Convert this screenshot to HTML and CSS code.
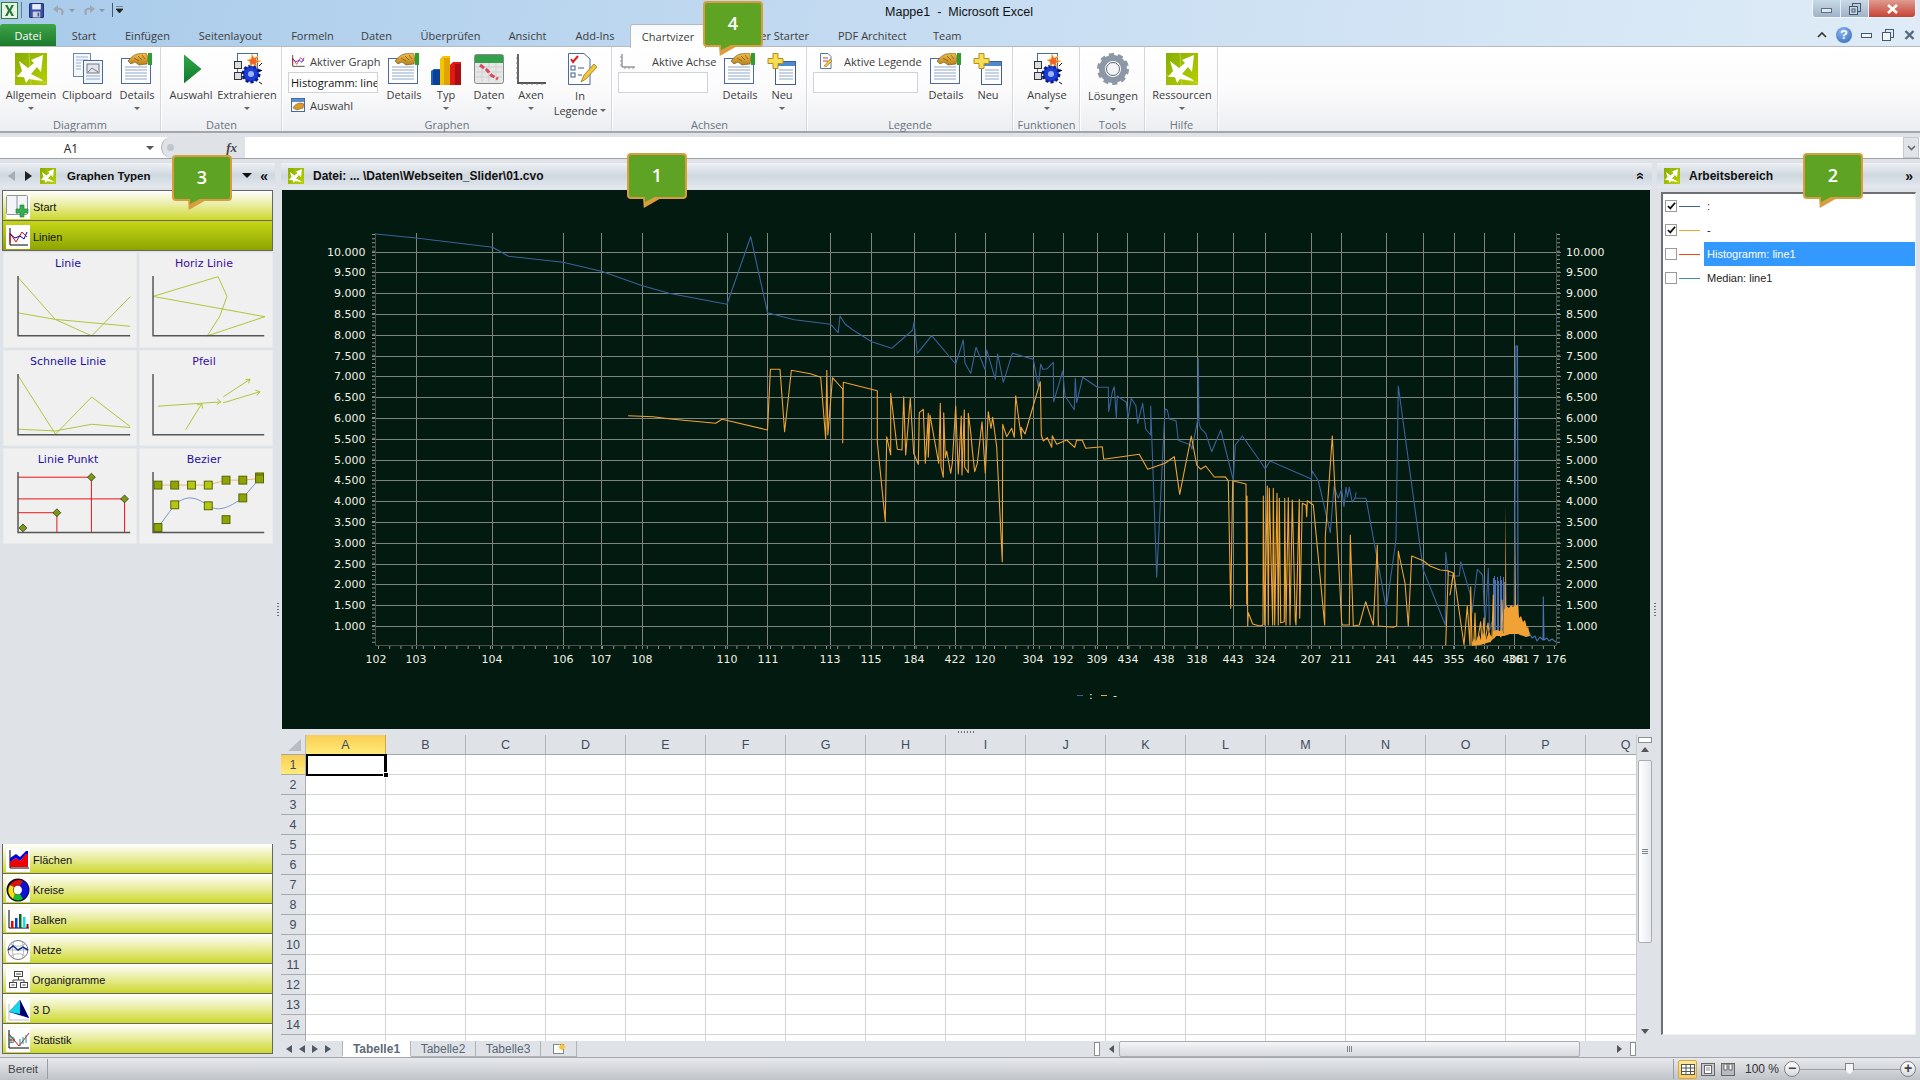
FILE: index.html
```html
<!DOCTYPE html>
<html lang="de">
<head>
<meta charset="utf-8">
<title>Mappe1 - Microsoft Excel</title>
<link rel="stylesheet" href="styles.css">
</head>
<body>
<svg class="defs" width="0" height="0">
  <defs>
    <linearGradient id="lime" x1="0" y1="0" x2="1" y2="1"><stop offset="0" stop-color="#86ad00"/><stop offset="1" stop-color="#b7cf00"/></linearGradient>
    <linearGradient id="play" x1="0" y1="0" x2="0" y2="1"><stop offset="0" stop-color="#2fa94a"/><stop offset="1" stop-color="#0f7a2a"/></linearGradient>
    <linearGradient id="hand" x1="0" y1="0" x2="0" y2="1"><stop offset="0" stop-color="#f2c04a"/><stop offset="1" stop-color="#b8801c"/></linearGradient>
    <symbol id="logo" viewBox="0 0 32 32">
      <rect width="32" height="32" fill="url(#lime)"/>
      <path d="M14 0 16 32M0 22 32 30" stroke="#c9dc5a" stroke-width=".7" fill="none"/>
      <path d="M28 2 26 19 22 14 16 21 26 26 28 28 14 26 11 30 9 24 2 24 7 18 4 8 13 15 19 10 16 7Z" fill="#fff"/>
    </symbol>
    <symbol id="details" viewBox="0 0 32 32">
      <rect x=".5" y="5.500" width="29" height="25" fill="#fff" stroke="#4b6a9e"/>
      <path d="M4 14H26M4 17H26M4 20H26M4 23H26M4 26H26" stroke="#8ea7c9"/>
      <path d="M7 8C10 4 13 2 16 1L25 0 27 4 26 11 18 12 14 9 10 11Z" fill="url(#hand)" stroke="#6b4a12" stroke-width=".6"/>
      <path d="M13 5 18 8M17 3 21 7M21 2 24 6" stroke="#7a4f10" stroke-width=".7"/>
      <rect x="27" y="0" width="4" height="12" fill="#2f9e2f"/>
    </symbol>
    <symbol id="neu" viewBox="-2 0 32 32">
      <rect x="7.500" y="8.500" width="20" height="23" fill="#fff" stroke="#3f5f93"/>
      <rect x="8" y="9" width="19" height="4" fill="#4f8ad0"/>
      <path d="M11 17H25M11 20H25M11 23H25M11 26H25" stroke="#8ea7c9"/>
      <path d="M5 .5H10V5.500H15V10.500H10V15.500H5V10.500H0V5.500H5Z" fill="#f7dc55" stroke="#b58e1e"/>
    </symbol>
    <symbol id="gearblue" viewBox="0 0 32 32">
      <rect x="6.500" y="0.500" width="20" height="25" fill="#fff" stroke="#4b6a9e"/>
      <rect x="3.500" y="8.500" width="7" height="7" fill="#ddd" stroke="#333"/>
      <rect x="3.500" y="19.500" width="7" height="7" fill="#ddd" stroke="#333"/>
      <circle cx="20" cy="21" r="8" fill="#1c3cd8" stroke="#0a1f8c" stroke-width="3" stroke-dasharray="3 2"/>
      <circle cx="20" cy="21" r="3" fill="#9db4f5"/>
      <path d="M21 1 23 5 27 3 25 7 30 8 25 10 26 14 22 11 19 13 19 9 16 7 20 6Z" fill="#f2622a" stroke="#f9d24a" stroke-width=".7"/>
      <path d="M29 16V19M27.500 17.500H31M28 29 31 31M28 13 31 10" stroke="#111"/>
    </symbol>
    <symbol id="chartline" viewBox="0 0 24 24">
      <path d="M4 3V20H22" stroke="#000" fill="none"/>
      <path d="M4 18V8L10 17 16 7 21 12" stroke="#e00" fill="none"/>
      <path d="M4 9 9 13 14 11 18 14 21 7" stroke="#00c" fill="none"/>
    </symbol>
  </defs>
</svg>
<div class="app">

  <div class="top">
    <div class="titlebar">
      <div class="qat">
        <svg class="qat-x" viewBox="0 0 17 17"><rect x=".5" y=".5" width="16" height="16" fill="#e9f3e6" stroke="#2f7d3a"/><path d="M4 3 7 8.500 4 14H6.500L8.500 10 10.500 14H13L10 8.500 13 3H10.500L8.500 7 6.500 3Z" fill="#1f7a34"/></svg>
        <span class="qat-sep"></span>
        <svg class="qat-i" viewBox="0 0 14 14"><rect x=".5" y=".5" width="13" height="13" rx="1" fill="#3a4fa8" stroke="#23306e"/><rect x="3" y="1" width="8" height="5" fill="#e8eef8"/><rect x="3.500" y="8" width="7" height="5.500" fill="#c9ced8"/><rect x="8" y="9" width="1.500" height="3.500" fill="#3a4fa8"/></svg>
        <svg class="qat-u" viewBox="0 0 14 14"><path d="M11 12C13 7 10 4 6 5L6 2 1 6 6 10 6 7C9 6 10 8 9 12Z" fill="#9ea7b3"/></svg>
        <span class="qat-arrow"></span>
        <svg class="qat-u" viewBox="0 0 14 14"><path d="M3 12C1 7 4 4 8 5L8 2 13 6 8 10 8 7C5 6 4 8 5 12Z" fill="#9ea7b3"/></svg>
        <span class="qat-arrow"></span>
        <span class="qat-sep2"></span>
        <svg class="qat-d" viewBox="0 0 7 8"><path d="M0 0H7M0 3H7L3.500 7Z" stroke="#222" fill="#222" stroke-width=".8"/></svg>
      </div>
      <div class="title">Mappe1  -  Microsoft Excel</div>
      <div class="winctl">
        <div class="wbtn wmin"><span class="min-ic"></span></div>
        <div class="wbtn wmax"><svg viewBox="0 0 12 12" class="max-ic"><rect x="3.500" y=".5" width="8" height="8" fill="none" stroke="#44586e"/><rect x=".5" y="3.500" width="8" height="8" fill="#c9d5e1" stroke="#44586e"/><rect x="3" y="6" width="3" height="3" fill="none" stroke="#44586e"/></svg></div>
        <div class="wbtn wclose"><svg viewBox="0 0 13 10" class="x-ic"><path d="M2 1 11 9M11 1 2 9" stroke="#fff" stroke-width="2.600"/></svg></div>
      </div>
    </div>
    <div class="tabs">
      <div class="tab tab-file">Datei</div>
      <div class="tab w-start">Start</div>
      <div class="tab w-einf">Einfügen</div>
      <div class="tab w-seit">Seitenlayout</div>
      <div class="tab w-form">Formeln</div>
      <div class="tab w-dat">Daten</div>
      <div class="tab w-ueb">Überprüfen</div>
      <div class="tab w-ans">Ansicht</div>
      <div class="tab w-add">Add-Ins</div>
      <div class="tab tab-on">Chartvizer</div>
      <div class="tab w-pow">Power Starter</div>
      <div class="tab w-pdf">PDF Architect</div>
      <div class="tab w-team">Team</div>
      <div class="tab-right">
        <svg class="tr-up" viewBox="0 0 10 8"><path d="M1 6 5 2 9 6" fill="none" stroke="#333" stroke-width="1.600"/></svg>
        <div class="help">?</div>
        <span class="tr-min"></span>
        <svg class="tr-rest" viewBox="0 0 12 12"><rect x="3.500" y=".5" width="8" height="8" fill="none" stroke="#44586e"/><rect x=".5" y="3.500" width="8" height="8" fill="#f0f5fa" stroke="#44586e"/></svg>
        <svg class="tr-x" viewBox="0 0 11 10"><path d="M1.500 1 9.500 9M9.500 1 1.500 9" stroke="#56687c" stroke-width="2.400"/></svg>
      </div>
    </div>
  </div>

  <div class="ribbon">
    <div class="group g-diag">
      <div class="gbody gb-diag">
        <div class="rb w56"><svg class="ic32"><use href="#logo"/></svg><span class="rl">Allgemein</span><span class="dd"></span></div>
        <div class="rb w56">
          <svg class="ic32" viewBox="0 0 32 32"><rect x="2.500" y=".5" width="17" height="23" fill="#f4f7fb" stroke="#6d86ad"/><path d="M5 4H17M5 7H17M5 10H10M5 13H10M5 16H10" stroke="#9fb2cd"/><rect x="12.500" y="7.500" width="19" height="23" fill="#f2f6fb" stroke="#4b6a9e"/><rect x="16" y="11" width="12" height="9" fill="#dfe5ee" stroke="#777"/><path d="M17 19 21 15 27 19" stroke="#777" fill="none"/><path d="M15 23H29M15 26H29" stroke="#8ea7c9"/></svg>
          <span class="rl">Clipboard</span>
        </div>
        <div class="rb w44"><svg class="ic32"><use href="#details"/></svg><span class="rl">Details</span><span class="dd"></span></div>
      </div>
      <div class="glabel">Diagramm</div>
    </div>
    <div class="group g-daten">
      <div class="gbody gb-daten">
        <div class="rb w58"><svg class="ic32" viewBox="0 0 32 32"><path d="M9 2 26 16 9 30Z" fill="url(#play)"/><path d="M9 2 26 16 9 30" fill="none" stroke="#0c6a22" stroke-width=".6"/></svg><span class="rl">Auswahl</span></div>
        <div class="rb w54"><svg class="ic32"><use href="#gearblue"/></svg><span class="rl">Extrahieren</span><span class="dd"></span></div>
      </div>
      <div class="glabel">Daten</div>
    </div>
    <div class="group g-graph">
      <div class="gbody gb-graph">
        <div class="smallcol w92">
          <div class="srow"><svg class="ic16"><use href="#chartline"/></svg><span>Aktiver Graph</span></div>
          <div class="sinput inp92">Histogramm: line</div>
          <div class="srow srow3"><svg class="ic16" viewBox="0 0 16 16"><rect x="1.500" y="1.500" width="13" height="13" fill="#fff" stroke="#4b6a9e"/><rect x="2" y="2" width="12" height="3" fill="#5b8fd1"/><path d="M3 11C5 7 8 6 11 6L14 7 13 11 7 13Z" fill="#d99a2a" stroke="#6b4a12" stroke-width=".5"/></svg><span>Auswahl</span></div>
        </div>
        <div class="rb w48"><svg class="ic32"><use href="#details"/></svg><span class="rl">Details</span></div>
        <div class="rb w36">
          <svg class="ic32" viewBox="0 0 32 32"><path d="M1 18 4 16H10V32H1Z" fill="#1463c8"/><rect x="3" y="17" width="7" height="15" fill="#0d3f94"/><path d="M10 6 13 3H20V32H10Z" fill="#f5c400"/><rect x="14" y="5" width="6" height="27" fill="#e0a400"/><path d="M20 12 23 9H31V32H20Z" fill="#e01818"/><rect x="25" y="11" width="6" height="21" fill="#a80e0e"/></svg>
          <span class="rl">Typ</span><span class="dd"></span>
        </div>
        <div class="rb w50">
          <svg class="ic32" viewBox="0 0 32 32"><rect x="1.500" y="1.500" width="29" height="29" rx="2" fill="#e6e6e6" stroke="#888"/><rect x="2" y="2" width="28" height="8" fill="#33a04b"/><path d="M3 14H29M3 19H29M3 24H29M9 10V29M16 10V29M23 10V29" stroke="#cfcfcf"/><path d="M7 12 14 17 18 22 25 26" stroke="#d84a5a" stroke-width="3" stroke-dasharray="5 2" fill="none"/></svg>
          <span class="rl">Daten</span><span class="dd"></span>
        </div>
        <div class="rb w34">
          <svg class="ic32" viewBox="0 0 32 32"><path d="M3 1V30H31" fill="none" stroke="#555" stroke-width="1.800"/><path d="M1 5H3M1 10H3M1 15H3M1 20H3M1 25H3M7 30V32M12 30V32M17 30V32M22 30V32M27 30V32" stroke="#777"/></svg>
          <span class="rl">Axen</span><span class="dd"></span>
        </div>
        <div class="rb w64">
          <svg class="ic32" viewBox="0 0 32 32"><path d="M4.500 .5H20L26 6V31.500H4.500Z" fill="#fff" stroke="#4b6a9e"/><path d="M7 6 9 9 14 3" stroke="#d92020" stroke-width="2" fill="none"/><rect x="7" y="13" width="4" height="4" fill="#fff" stroke="#3a5a8c"/><rect x="7" y="20" width="4" height="4" fill="#fff" stroke="#3a5a8c"/><path d="M14 15H20M14 22H18" stroke="#3a5a8c"/><path d="M17 29 20 22 30 11 33 14 22 26Z" fill="#f2c53c" stroke="#8a6a10" stroke-width=".7"/></svg>
          <span class="rl rl2">In<br>Legende <i class="dd dd-in"></i></span>
        </div>
      </div>
      <div class="glabel">Graphen</div>
    </div>
    <div class="group g-achs">
      <div class="gbody gb-achs">
        <div class="smallcol w100">
          <div class="srow"><svg class="ic16 ic-l" viewBox="0 0 16 16"><path d="M2 1V14H15" fill="none" stroke="#666" stroke-width="1"/><path d="M0 4H2M0 8H2M0 12H2M5 14V16M9 14V16M13 14V16" stroke="#999"/></svg><span class="tx-achse">Aktive Achse</span></div>
          <div class="sinput inp90"></div>
        </div>
        <div class="rb w44"><svg class="ic32"><use href="#details"/></svg><span class="rl">Details</span></div>
        <div class="rb w40"><svg class="ic32"><use href="#neu"/></svg><span class="rl">Neu</span><span class="dd"></span></div>
      </div>
      <div class="glabel">Achsen</div>
    </div>
    <div class="group g-leg">
      <div class="gbody gb-leg">
        <div class="smallcol w112">
          <div class="srow"><svg class="ic16 ic-leg" viewBox="0 0 16 16"><path d="M2.500 .5H10L13 3.500V15.500H2.500Z" fill="#fff" stroke="#5a76a3"/><path d="M5 5H10M5 8H10" stroke="#c04040"/><path d="M6 13 12 6 14 8 8 14Z" fill="#f0c040" stroke="#8a6a10" stroke-width=".5"/></svg><span class="tx-leg">Aktive Legende</span></div>
          <div class="sinput inp105"></div>
        </div>
        <div class="rb w44"><svg class="ic32"><use href="#details"/></svg><span class="rl">Details</span></div>
        <div class="rb w40"><svg class="ic32"><use href="#neu"/></svg><span class="rl">Neu</span></div>
      </div>
      <div class="glabel">Legende</div>
    </div>
    <div class="group g-funk">
      <div class="gbody gb-one"><div class="rb w66"><svg class="ic32"><use href="#gearblue"/></svg><span class="rl">Analyse</span><span class="dd"></span></div></div>
      <div class="glabel">Funktionen</div>
    </div>
    <div class="group g-tool">
      <div class="gbody gb-one">
        <div class="rb w64">
          <svg class="ic32" viewBox="0 0 32 32"><circle cx="16" cy="16" r="11" fill="none" stroke="#8d98a6" stroke-width="6"/><circle cx="16" cy="16" r="14" fill="none" stroke="#8d98a6" stroke-width="4" stroke-dasharray="5 3.800"/><circle cx="16" cy="16" r="6.500" fill="#f3f4f6" stroke="#5f6a78"/></svg>
          <span class="rl rl-los">Lösungen</span><span class="dd"></span>
        </div>
      </div>
      <div class="glabel">Tools</div>
    </div>
    <div class="group g-hilf">
      <div class="gbody gb-one"><div class="rb w72"><svg class="ic32"><use href="#logo"/></svg><span class="rl">Ressourcen</span><span class="dd"></span></div></div>
      <div class="glabel">Hilfe</div>
    </div>
  </div>

  <div class="fstrip"></div>
  <div class="formula">
    <div class="namebox"><span class="nb-text">A1</span><span class="nb-arrow"></span></div>
    <div class="fxbox"><span class="fx-round"></span><span class="fx">fx</span></div>
    <div class="finput"></div>
    <div class="fexpand"><svg viewBox="0 0 9 6" class="fexp-ic"><path d="M1 1 4.500 4.500 8 1" fill="none" stroke="#667" stroke-width="1.600"/></svg></div>
  </div>
  <div class="fstrip2"></div>

  <div class="work">
    <div class="left">
      <div class="phead phead-left">
        <span class="nav-l"></span><span class="nav-r"></span>
        <svg class="ic16"><use href="#logo"/></svg>
        <span class="ptitle ptitle-g">Graphen Typen</span>
        <span class="pspacer"></span>
        <span class="ph-down"></span>
        <span class="chev chev-l">«</span>
      </div>
      <div class="acc acc-first">
        <span class="accic"><svg viewBox="0 0 24 24"><rect x=".5" y=".5" width="21" height="19" rx="1" fill="#f3f5f8" stroke="#8b94a0"/><path d="M11 1V19" stroke="#8b94a0"/><path d="M14 10H18V14H22V18H18V22H14V18H10V14H14Z" fill="#36b04c" stroke="#1b7a2b" stroke-width=".6"/></svg></span>
        <span>Start</span>
      </div>
      <div class="acc acc-on">
        <span class="accic"><svg viewBox="0 0 24 24"><use href="#chartline"/></svg></span>
        <span>Linien</span>
      </div>
      <div class="gallery">
        <div class="gcell"><div class="gtitle">Linie</div>
          <svg class="gs" viewBox="0 0 134 74"><polyline class="lim" points="14,3 52,46 89,62.700 128,23"/><polyline class="lim" points="14,39.300 52,46 128,53"/><path class="gax" d="M14.300 2V62.700H128"/></svg></div>
        <div class="gcell"><div class="gtitle gt-v">Horiz Linie</div>
          <svg class="gs" viewBox="0 0 134 74"><polyline class="lim" points="13.300,22.700 79.300,2.700 88.300,22.700 81,42.700 68.300,62.700 126.700,43.300 13.300,22.700"/><path class="gax" d="M13.300 2V62.700H126"/></svg></div>
        <div class="gcell"><div class="gtitle">Schnelle Linie</div>
          <svg class="gs" viewBox="0 0 134 74"><polyline class="lim" points="14,3 52.300,63 89,25.300 128,55.300"/><polyline class="lim" points="14,58 52.300,59.700 89,53 128,56.300"/><path class="gax" d="M14.300 2V63.700H128"/></svg></div>
        <div class="gcell"><div class="gtitle gt-v">Pfeil</div>
          <svg class="gs" viewBox="0 0 134 74"><path class="lim" d="M18.300 34.700 82 30.300M78 27 82 30.300 78 33M46.300 58.700 62.700 32M58 33.500 62.700 32 63.500 37M84.300 31.300 121.700 20M117 18.500 121.700 20 118.500 24M84.300 25.300 111.700 7.300M107 7.500 111.700 7.300 110 11.500"/><path class="gax" d="M13.300 2V63.700H126"/></svg></div>
        <div class="gcell"><div class="gtitle">Linie Punkt</div>
          <svg class="gs" viewBox="0 0 134 74"><path class="red" d="M14 7.300H88.700V63M14 29.300H122.300V63M14 43.300H53.700V63"/><path class="gax" d="M14.300 2V63.300H128"/><path class="dia" d="M88.700 3.300 92.700 7.300 88.700 11.300 84.700 7.300ZM122.300 25.300 126.300 29.300 122.300 33.300 118.300 29.300ZM53.700 39.300 57.700 43.300 53.700 47.300 49.700 43.300ZM19.300 54.700 23.300 58.700 19.300 62.700 15.300 58.700Z"/></svg></div>
        <div class="gcell"><div class="gtitle">Bezier</div>
          <svg class="gs" viewBox="0 0 134 74"><path class="gax" d="M13.300 2V63.300H126"/><path class="bz-o" d="M18 15.300H69L87 10.300H104L121 8.700"/><path class="bz-b" d="M18.300 58.300 35.300 35.300C48 24 58 28 69.300 36.300 82 44 94 35 104.300 28.300L121.300 8.700"/>
            <g class="sq"><rect x="14.300" y="11.300" width="8" height="8"/><rect x="31.300" y="11.300" width="8" height="8"/><rect class="sq2" x="48.300" y="11.300" width="8" height="8"/><rect class="sq2" x="65.300" y="11.300" width="8" height="8"/><rect x="83.300" y="6.300" width="8" height="8"/><rect x="100.300" y="6.300" width="8" height="8"/><rect x="117.300" y="3" width="8" height="8"/><rect x="117.300" y="5" width="8" height="8"/><rect x="14.300" y="54.300" width="8" height="8"/><rect class="sq2" x="31.300" y="31.300" width="8" height="8"/><rect class="sq2" x="65.300" y="32.300" width="8" height="8"/><rect x="100.300" y="24.300" width="8" height="8"/><rect x="83.300" y="46.300" width="8" height="8"/></g></svg></div>
      </div>
      <div class="pspacer"></div>
      <div class="acc"><span class="accic"><svg viewBox="0 0 24 24"><path d="M4 2V20H23" stroke="#000" fill="none"/><path d="M4 14 10 10 14 13 20 6 22 6V19H4Z" fill="#e00"/><path d="M4 10 10 6 14 9 20 3 22 3V6L20 6 14 13 10 10 4 14Z" fill="#00d"/></svg></span><span>Flächen</span></div>
      <div class="acc"><span class="accic"><svg viewBox="0 0 24 24"><circle cx="12" cy="12" r="8" fill="none" stroke="#111" stroke-width="7"/><path d="M4 7A10 10 0 0 1 17 3L14 8A5 5 0 0 0 8 9Z" fill="#e01010"/><path d="M17 3A10 10 0 0 1 17 21L14 16A5 5 0 0 0 14 8Z" fill="#1010d8"/><path d="M17 21A10 10 0 0 1 7 21L9 16A5 5 0 0 0 14 16Z" fill="#10c030"/><path d="M7 21A10 10 0 0 1 4 7L8 9A5 5 0 0 0 9 16Z" fill="#f5e010"/></svg></span><span>Kreise</span></div>
      <div class="acc"><span class="accic"><svg viewBox="0 0 24 24"><path d="M3 2V20H23" stroke="#000" fill="none"/><rect x="5" y="13" width="2.500" height="7" fill="#e00"/><rect x="9" y="10" width="2.500" height="10" fill="#0040d0"/><rect x="13" y="6" width="2.500" height="14" fill="#006a20"/><rect x="17" y="9" width="2.500" height="11" fill="#10e0e0"/><rect x="20.500" y="16" width="2" height="4" fill="#a00000"/></svg></span><span>Balken</span></div>
      <div class="acc"><span class="accic"><svg viewBox="0 0 24 24"><ellipse cx="12" cy="12" rx="10" ry="9.500" fill="#fff" stroke="#777"/><path d="M2 12H22M5 6C10 9 14 9 19 6M5 18C10 15 14 15 19 18M8 3C6 9 6 15 8 21M16 3C18 9 18 15 16 21" fill="none" stroke="#999" stroke-width=".7"/><path d="M2 12 7 8 12 12 17 9 22 12" fill="none" stroke="#0a2a90" stroke-width="1.500"/></svg></span><span>Netze</span></div>
      <div class="acc"><span class="accic"><svg viewBox="0 0 24 24"><rect x="8.500" y="3.500" width="8" height="5" fill="#fff" stroke="#444"/><rect x="3.500" y="14.500" width="7" height="5" fill="#fff" stroke="#444"/><rect x="14.500" y="14.500" width="7" height="5" fill="#fff" stroke="#444"/><path d="M12.500 9V12M7 14V12H18V14M10 6H15M5.500 17H8.500M16.500 17H19.500" fill="none" stroke="#444"/></svg></span><span class="acc-org">Organigramme</span></div>
      <div class="acc"><span class="accic"><svg viewBox="0 0 24 24"><path d="M3 6V22H23" fill="none" stroke="#bbb"/><path d="M14 2 23 20 3 14Z" fill="#0a0aa8"/><path d="M14 2 3 14 14 16Z" fill="#15d8e6"/><path d="M14 2 14 16 23 20Z" fill="#00006a"/></svg></span><span>3 D</span></div>
      <div class="acc"><span class="accic"><svg viewBox="0 0 24 24"><path d="M3 2V20H23" stroke="#000" fill="none"/><path d="M3 6 13 18 23 5" fill="none" stroke="#e00"/><path d="M3 8 8 10V14L3 15M5 8V14M14 11V18M17 9V16M20 7V15" fill="none" stroke="#0a9a9a"/><path d="M3 12H9" stroke="#e00"/></svg></span><span>Statistik</span></div>
    </div>

    <div class="vsplit"><span class="grip"></span></div>

    <div class="center">
      <div class="phead phead-c">
        <svg class="ic16"><use href="#logo"/></svg>
        <span class="ptitle ptitle-c">Datei: ... \Daten\Webseiten_Slider\01.cvo</span>
        <span class="pspacer"></span>
        <span class="chev chev-up">«</span>
      </div>
      <div class="chart">
        <svg class="chart-svg" width="1368" height="539" viewBox="282 190 1368 539">
          <path class="grid" d="M372 252.500H1561M372 272.500H1561M372 293.500H1561M372 314.500H1561M372 335.500H1561M372 356.500H1561M372 376.500H1561M372 397.500H1561M372 418.500H1561M372 439.500H1561M372 460.500H1561M372 480.500H1561M372 501.500H1561M372 522.500H1561M372 543.500H1561M372 564.500H1561M372 584.500H1561M372 605.500H1561M372 626.500H1561"/>
          <path class="grid" d="M416.500 233V649M492.500 233V649M563.500 233V649M601.500 233V649M642.500 233V649M727.500 233V649M767.500 233V649M830.500 233V649M871.500 233V649M914.500 233V649M955.500 233V649M985.500 233V649M1033.500 233V649M1063.500 233V649M1097.500 233V649M1127.500 233V649M1164.500 233V649M1197.500 233V649M1233.500 233V649M1265.500 233V649M1311.500 233V649M1341.500 233V649M1386.500 233V649M1423.500 233V649M1454.500 233V649M1484.500 233V649M1514.500 233V649"/>
          <path class="axis" d="M375.500 233V645.500H1556.500V233"/>
          <path class="tick" d="M373.500 234V645" stroke-dasharray="1 3.160"/>
          <path class="tick" d="M1558.500 234V645" stroke-dasharray="1 3.160"/>
          <path class="tick" d="M378 647.500H1556" stroke-dasharray="1 10.200"/>

          <polyline class="blue" points="376,234 416,238 492.500,247.300 508.600,256.300 563,262.300 601.400,271.300 642.500,285.700 669,293.300 727,304.300 750.700,236.700 767.500,312.700 794.300,319.700 830.700,324.300 838.200,332.700 840,316 845,324 853,330 871.700,341.700 891.700,348.300 912.700,330 914,322 917.300,353.300 931.700,335.700 955.700,364 963.300,340 965,363.300 970.700,373.300 976,347.300 985.300,370 986.700,350 995.300,379.300 997.700,354 1003.300,382.300 1012.300,353.300 1033.300,359.300 1038.300,386.700 1040.700,364 1042.700,369.300 1047.300,368.700 1053.300,362.300 1053.700,401.700 1062.700,371 1065,396 1074.300,409.700 1075.300,378.300 1076.700,402.700 1082.700,377.300 1097.300,387.300 1108.300,387.300 1108.700,411.700 1112.500,391 1114.300,386.700 1116.300,417.700 1117.300,396 1126.300,402.300 1128,418.300 1131.300,398.300 1136,406 1137.700,423.300 1142.700,403.300 1145.700,429 1150.700,435 1150.700,406 1156.700,577.300 1165,408.700 1167.300,410 1169.300,419 1176,420.700 1178.300,440.300 1190.700,445 1192,449.300 1198.300,416.700 1198.300,358.300 1199,423 1200.700,428.300 1205.700,433.300 1211.700,451.700 1220.700,430 1233.300,480 1235.300,445 1242.300,436 1260,461 1265.300,469 1270,461 1311.300,479 1312.300,471 1318.300,480.700 1330.300,532.700 1334,486.700 1338.300,498.300 1341.700,489.300 1344,506.700 1346,487.300 1347.500,497 1349.300,487.300 1352.300,502.300 1355,498 1356,492.700 1355,498 1366,498.300 1386.300,608.300 1396,540 1398.300,386 1423.300,570 1445.300,625 1445.700,552.300 1448.300,575 1453,576 1459.300,576 1460.700,561.700 1470,593.300 1472,613 1477.300,569.300 1482.700,575 1485,626.700 1488.300,568.300 1489.500,630 1492,622"/>
          <path class="bluedense" d="M1493.500 632V578M1494.500 632V576M1495.500 632V580M1497.500 632V577M1498.500 632V581M1500.500 632V576M1501.500 632V580M1503.500 632V577M1504.500 632V582"/>
          <polyline class="blue blue-b" points="1504,632 1506,628 1508,634 1510,628 1512,634 1514,630 1516,346 1517.500,346 1518,632 1521,635 1523,630 1526,636 1529,632 1532,638 1535,636 1537,641 1540,637 1543,640 1543.300,596.700 1544,640 1547,638 1549,641 1552,639 1556,642"/>

          <polyline class="orange" points="628.200,415.700 653,416.700 672.900,419.300 715.700,423.300 722,419.300 767.500,430 770.400,369.300 780,369.300 784.600,431.700 791.400,370.300 810.400,373.700 820.700,377.300 825.700,439 826.800,370.300 827.900,435 832.500,377.700 842.700,389 842.700,442.700 843.300,382.300 877.300,390.700 877.300,441.700 885.300,521.700 886.700,436.700 890.700,455 890.700,393.300 897.300,449.300 902,450 903.700,396.700 905.700,455 910.300,398.300 913.700,453.300 918.300,464.300 919.300,412.700 923.300,409.300 925.300,463.300 928.300,413.300 928.300,457 930,415 938.700,463.300 940.300,403.300 941,467 943.300,477.300 943.700,412.700 945.300,458 946.700,451 950.700,473.300 952.300,463 955.700,406 958.300,474 961.300,416 962,475 964.300,410 964.700,467 968.300,472.700 968.300,413.300 970.700,432 972.300,450 974.700,471.700 977.300,463.300 982,421.700 985.300,473.300 988.300,411.700 991,428.300 992.700,417.300 996.700,447 1002.300,561.700 1002.700,424.300 1006.700,436.700 1011.700,428.300 1014.300,437.300 1015.700,395.700 1020,428.300 1021.700,439 1021,427.300 1025,434 1040.300,381.700 1041.300,435 1043.300,441 1047.300,437.700 1051.700,447.300 1052.300,435.700 1056.700,444.300 1066.700,440 1074.700,447.300 1076.700,440 1082.300,440.300 1085.700,448.300 1102.300,446.700 1103.700,459.300 1139.300,454.300 1147.700,469.300 1165,463.300 1174.300,456.700 1179.700,494.300 1191.300,436 1196.700,465 1200.700,469.300 1205.700,466 1214.300,477 1225,476.700 1228.300,480.700 1230.700,608.300 1232.700,480.700 1246,484 1246.700,604 1247,496 1247.700,626 1248.300,612.700 1252.700,624 1260,626 1263,625 1263.300,496 1264.700,625 1267.300,486 1268.300,625 1269.300,488.300 1272.700,625 1273.300,488.300 1274.700,625 1277,493.300 1278.300,625 1279.300,498.300 1280.700,622.700 1284.300,621.700 1284.700,498.300 1286,625 1288.300,497.700 1290,625 1292.300,500 1295.300,620 1296,625 1299.300,499.300 1299.700,618.300 1302.300,503.300 1306,505 1306.700,516.700 1307.300,500.700 1313.300,505 1324.700,625 1325.300,536.700 1332.300,436 1341.700,623.300 1342.700,625 1349.300,625 1350.300,535 1353.300,626 1359.300,625 1365.700,601.700 1373.300,625 1377.300,545 1378.300,626 1393.300,627.300 1396.700,626 1398.300,551 1405,583 1408.300,626 1411.700,556 1423.300,560.700 1430,566 1440,570 1448.300,570.700 1445.700,645 1448.300,571 1453.300,573 1450,595 1453.700,573 1464,645 1467.300,606 1470,645 1470.700,586.700 1472,645 1474,640 1475,613 1476,645 1478,638 1480.700,621.700 1482,644 1484,618 1485,643 1488,623 1490,642 1492,636 1493.300,595 1494,638 1498,632 1501,637 1502,600 1503,634"/>
          <polygon class="orangefill" points="1472,646 1474,638 1476,642 1479,634 1481,640 1484,632 1486,640 1489,632 1492,638 1493,631 1497,630 1500,631 1502,630 1504,634 1504,610 1505,608 1505.700,505 1506.300,606 1509,608 1511,605 1513,607 1515,605 1515.300,510 1516,606 1518,604 1519,618 1521,616 1523,622 1525,620 1527,628 1528,626 1530,636 1526,637 1518,634 1510,634 1504,636 1496,636 1490,642 1480,645"/>

          <g class="yl"><text class="lab lr" x="365.500" y="256.500">10.000</text><text class="lab lr" x="365.500" y="276.500">9.500</text><text class="lab lr" x="365.500" y="297.500">9.000</text><text class="lab lr" x="365.500" y="318.500">8.500</text><text class="lab lr" x="365.500" y="339.500">8.000</text><text class="lab lr" x="365.500" y="360.500">7.500</text><text class="lab lr" x="365.500" y="380.500">7.000</text><text class="lab lr" x="365.500" y="401.500">6.500</text><text class="lab lr" x="365.500" y="422.500">6.000</text><text class="lab lr" x="365.500" y="443.500">5.500</text><text class="lab lr" x="365.500" y="464.500">5.000</text><text class="lab lr" x="365.500" y="484.500">4.500</text><text class="lab lr" x="365.500" y="505.500">4.000</text><text class="lab lr" x="365.500" y="526.500">3.500</text><text class="lab lr" x="365.500" y="547.500">3.000</text><text class="lab lr" x="365.500" y="568.500">2.500</text><text class="lab lr" x="365.500" y="588.500">2.000</text><text class="lab lr" x="365.500" y="609.500">1.500</text><text class="lab lr" x="365.500" y="630.500">1.000</text>
          <text class="lab" x="1566" y="256.500">10.000</text><text class="lab" x="1566" y="276.500">9.500</text><text class="lab" x="1566" y="297.500">9.000</text><text class="lab" x="1566" y="318.500">8.500</text><text class="lab" x="1566" y="339.500">8.000</text><text class="lab" x="1566" y="360.500">7.500</text><text class="lab" x="1566" y="380.500">7.000</text><text class="lab" x="1566" y="401.500">6.500</text><text class="lab" x="1566" y="422.500">6.000</text><text class="lab" x="1566" y="443.500">5.500</text><text class="lab" x="1566" y="464.500">5.000</text><text class="lab" x="1566" y="484.500">4.500</text><text class="lab" x="1566" y="505.500">4.000</text><text class="lab" x="1566" y="526.500">3.500</text><text class="lab" x="1566" y="547.500">3.000</text><text class="lab" x="1566" y="568.500">2.500</text><text class="lab" x="1566" y="588.500">2.000</text><text class="lab" x="1566" y="609.500">1.500</text><text class="lab" x="1566" y="630.500">1.000</text></g>
          <g class="xl"><text class="lab" x="376" y="663">102</text><text class="lab" x="416" y="663">103</text><text class="lab" x="492" y="663">104</text><text class="lab" x="563" y="663">106</text><text class="lab" x="601" y="663">107</text><text class="lab" x="642" y="663">108</text><text class="lab" x="727" y="663">110</text><text class="lab" x="768" y="663">111</text><text class="lab" x="830" y="663">113</text><text class="lab" x="871" y="663">115</text><text class="lab" x="914" y="663">184</text><text class="lab" x="955" y="663">422</text><text class="lab" x="985" y="663">120</text><text class="lab" x="1033" y="663">304</text><text class="lab" x="1063" y="663">192</text><text class="lab" x="1097" y="663">309</text><text class="lab" x="1128" y="663">434</text><text class="lab" x="1164" y="663">438</text><text class="lab" x="1197" y="663">318</text><text class="lab" x="1233" y="663">443</text><text class="lab" x="1265" y="663">324</text><text class="lab" x="1311" y="663">207</text><text class="lab" x="1341" y="663">211</text><text class="lab" x="1386" y="663">241</text><text class="lab" x="1423" y="663">445</text><text class="lab" x="1454" y="663">355</text><text class="lab" x="1484" y="663">460</text><text class="lab" x="1513" y="663">408</text><text class="lab" x="1519" y="663">361</text><text class="lab" x="1536" y="663">7</text><text class="lab" x="1556" y="663">176</text></g>
          <path class="leg-bl" d="M1077 695.500H1083"/>
          <text class="lab" x="1089" y="699">:</text>
          <path class="leg-ol" d="M1101 695.500H1107"/>
          <text class="lab" x="1113" y="699">-</text>
        </svg>
      </div>
      <div class="hsplit"><span class="hgrip"></span></div>
      <div class="sheet">
        <div class="sheet-main">
          <div class="gridarea">
            <div class="colheads">
              <div class="corner"><svg viewBox="0 0 16 14" class="corner-ic"><path d="M15 1V13H2Z" fill="#b9bdc3"/></svg></div>
              <div class="ch ch-on">A</div><div class="ch">B</div><div class="ch">C</div><div class="ch">D</div><div class="ch">E</div><div class="ch">F</div><div class="ch">G</div><div class="ch">H</div><div class="ch">I</div><div class="ch">J</div><div class="ch">K</div><div class="ch">L</div><div class="ch">M</div><div class="ch">N</div><div class="ch">O</div><div class="ch">P</div><div class="ch">Q</div>
            </div>
            <div class="gridbody">
              <div class="rowheads">
                <div class="rh rh-on">1</div><div class="rh">2</div><div class="rh">3</div><div class="rh">4</div><div class="rh">5</div><div class="rh">6</div><div class="rh">7</div><div class="rh">8</div><div class="rh">9</div><div class="rh">10</div><div class="rh">11</div><div class="rh">12</div><div class="rh">13</div><div class="rh">14</div><div class="rh"></div>
              </div>
              <div class="cells"><div class="sel"><span class="selh"></span></div></div>
            </div>
          </div>
          <div class="vscroll">
            <span class="vs-split"></span>
            <span class="vs-up"></span>
            <div class="vs-thumb"><span class="vs-grip"></span></div>
            <span class="vs-track"></span>
            <span class="vs-down"></span>
          </div>
        </div>
        <div class="tabbar">
          <div class="tnav"><span class="tn tn-first"></span><span class="tn tn-prev"></span><span class="tn tn-next"></span><span class="tn tn-last"></span></div>
          <div class="stab stab-on">Tabelle1</div>
          <div class="stab">Tabelle2</div>
          <div class="stab">Tabelle3</div>
          <div class="stab stab-new"><svg viewBox="0 0 14 12" class="newsh"><rect x="1.500" y="1.500" width="10" height="9" fill="#fff" stroke="#7d8794"/><path d="M10 0 11 2 13 1 12 3 14 4 12 5 13 7 11 6 10 8 9 6 7 7 8 5 6 4 8 3 7 1 9 2Z" fill="#f4c542"/></svg></div>
          <span class="pspacer"></span>
          <div class="hs-split"></div>
          <span class="hs-left"></span>
          <div class="hs-thumb"><span class="hs-grip"></span></div>
          <span class="hs-right"></span>
          <div class="hs-mini"></div>
          <div class="hs-end"></div>
        </div>
      </div>
    </div>

    <div class="vsplit vsplit-r"><span class="grip"></span></div>

    <div class="right">
      <div class="phead phead-r">
        <svg class="ic16"><use href="#logo"/></svg>
        <span class="ptitle ptitle-a">Arbeitsbereich</span>
        <span class="pspacer"></span>
        <span class="chev chev-r">»</span>
      </div>
      <div class="listbox">
        <div class="li"><span class="cb cb-on"><svg viewBox="0 0 11 10" class="chk"><path d="M1 5 4 8 10 1" fill="none" stroke="#111" stroke-width="2.200"/></svg></span><span class="ln ln-b"></span><span class="lt lt-c">:</span></div>
        <div class="li"><span class="cb cb-on"><svg viewBox="0 0 11 10" class="chk"><path d="M1 5 4 8 10 1" fill="none" stroke="#111" stroke-width="2.200"/></svg></span><span class="ln ln-o"></span><span class="lt">-</span></div>
        <div class="li"><span class="cb"></span><span class="ln ln-r"></span><span class="lt lt-sel">Histogramm: line1</span></div>
        <div class="li"><span class="cb"></span><span class="ln ln-t"></span><span class="lt">Median: line1</span></div>
      </div>
    </div>
  </div>

  <div class="status">
    <span class="st-text">Bereit</span>
    <span class="st-sep"></span>
    <span class="pspacer"></span>
    <span class="st-sep2"></span>
    <span class="view view-on"><svg viewBox="0 0 14 11" class="vic"><rect x=".5" y=".5" width="13" height="10" fill="#fff" stroke="#555"/><path d="M.5 4H13.500M.5 7.500H13.500M5 .5V10.500M9.500 .5V10.500" stroke="#555"/></svg></span>
    <span class="view"><svg viewBox="0 0 14 13" class="vic2"><rect x=".5" y=".5" width="13" height="12" fill="#c8ccd1" stroke="#666"/><rect x="3.500" y="2.500" width="7" height="8" fill="#fff" stroke="#666"/><path d="M5 5H9M5 7H9" stroke="#888"/></svg></span>
    <span class="view"><svg viewBox="0 0 14 13" class="vic2"><rect x=".5" y=".5" width="13" height="12" fill="#b8bcc2" stroke="#666"/><path d="M3 1V7H6V1ZM8 1V7H11V1Z" fill="#fff" stroke="#666"/></svg></span>
    <span class="zoomtx">100 %</span>
    <span class="zbtn">−</span>
    <span class="zslider"><span class="zthumb"></span></span>
    <span class="zbtn">+</span>
  </div>

  <div class="callout c1">1</div>
  <div class="callout c2">2</div>
  <div class="callout c3">3</div>
  <div class="callout c4">4</div>
</div>
</body>
</html>
```

FILE: styles.css
```css
* { box-sizing: border-box; }
html, body { margin: 0; padding: 0; background: #dfe3e8; }
.defs { position: absolute; }
.app {
  position: relative; width: 1920px; height: 1080px; overflow: hidden;
  display: flex; flex-direction: column;
  font-family: "Open Sans", "Liberation Sans", sans-serif; font-size: 11px; color: #333;
}
.pspacer { flex: 1; }

/* top */
.top { height: 47px; flex: none; background: linear-gradient(100deg, #a8cbea 0%, #c4dbf1 45%, #dfecf7 100%); }
.titlebar { height: 24px; display: grid; grid-template-columns: 1fr auto 1fr; }
.qat { display: flex; align-items: center; height: 20px; padding-left: 1px; }
.qat-x { width: 17px; height: 17px; }
.qat-sep { width: 1px; height: 16px; background: #6a7a8c; margin: 0 7px 0 3px; }
.qat-i { width: 15px; height: 15px; margin-right: 8px; }
.qat-u { width: 14px; height: 14px; }
.qat-arrow { width: 0; height: 0; border: 3px solid transparent; border-top: 3px solid #8a96a4; margin: 3px 7px 0 3px; }
.qat-sep2 { width: 1px; height: 14px; background: #44586e; margin: 0 3px 0 0; }
.qat-d { width: 7px; height: 8px; }
.title { font-family: "Liberation Sans", sans-serif; font-size: 12.500px; color: #111; white-space: pre; padding: 5px 2px 0 0; }
.winctl { justify-self: end; display: flex; height: 18px; margin-right: 4px; border: 1px solid #f0f6fb; border-top: 0; border-radius: 0 0 4px 4px; overflow: hidden; }
.wbtn { display: flex; align-items: center; justify-content: center; background: linear-gradient(#c9d9e8, #9fb2c6); border-right: 1px solid #e8eef4; }
.wmin { width: 28px; }
.wmax { width: 28px; }
.wclose { width: 46px; background: linear-gradient(#df9b90, #c74334); border-right: 0; }
.min-ic { width: 11px; height: 5px; background: #dfe7ef; border: 1px solid #5c6f83; margin-top: 4px; }
.max-ic { width: 12px; height: 12px; }
.x-ic { width: 13px; height: 10px; }

.tabs { height: 23px; display: flex; align-items: stretch; position: relative; border-bottom: 1px solid #b6babf; }
.tab { display: flex; align-items: center; justify-content: center; color: #3d3d3d; font-size: 11px; flex: none; }
.tab-file { width: 56px; background: linear-gradient(#3da448, #1c7a2c); color: #fff; border-radius: 3px 3px 0 0; margin-left: 0; }
.w-start { width: 56px; }
.w-einf { width: 71px; }
.w-seit { width: 95px; }
.w-form { width: 69px; }
.w-dat { width: 59px; }
.w-ueb { width: 89px; }
.w-ans { width: 65px; }
.w-add { width: 70px; }
.tab-on { width: 76px; height: 24px; background: linear-gradient(#f8fafc, #fff); border: 1px solid #b6babf; border-bottom: 0; border-radius: 3px 3px 0 0; }
.w-pow { width: 103px; justify-content: flex-end; }
.w-pdf { width: 63px; margin-left: 29px; justify-content: flex-start; white-space: nowrap; }
.w-team { width: 60px; margin-left: 32px; justify-content: flex-start; }
.tab-right { margin-left: auto; display: flex; align-items: center; padding-right: 5px; }
.tr-up { width: 10px; height: 8px; margin-right: 9px; }
.help { width: 16px; height: 16px; border-radius: 50%; background: radial-gradient(circle at 40% 30%, #8bb6ee, #2f66bb); color: #fff; font: bold 13px/16px "Liberation Sans", sans-serif; text-align: center; margin-right: 9px; }
.tr-min { width: 11px; height: 5px; background: #f0f5fa; border: 1px solid #44586e; margin-right: 10px; margin-top: 1px; }
.tr-rest { width: 12px; height: 12px; margin-right: 10px; }
.tr-x { width: 11px; height: 10px; }

/* ribbon */
.ribbon { height: 86px; flex: none; display: flex; background: linear-gradient(#fff 0%, #fbfbfc 50%, #eceef1 100%); border-bottom: 2px solid #a3a6ab; }
.group { display: flex; flex-direction: column; border-right: 1px solid #d4d7db; flex: none; box-shadow: 1px 0 0 #fff; margin-right: 1px; }
.g-diag { width: 161px; }
.g-daten { width: 120px; }
.g-graph { width: 329px; }
.g-achs { width: 194px; }
.g-leg { width: 205px; }
.g-funk { width: 66px; }
.g-tool { width: 64px; }
.g-hilf { width: 72px; }
.gbody { height: 70px; flex: none; display: flex; padding-top: 5px; }
.gb-diag { padding-left: 3px; }
.gb-graph { padding-left: 5px; }
.gb-achs { padding-left: 5px; }
.gb-leg { padding-left: 5px; }
.glabel { height: 14px; flex: none; text-align: center; color: #6a7481; font-size: 11px; line-height: 16px; }
.rb { display: flex; flex-direction: column; align-items: center; flex: none; padding-top: 1px; white-space: nowrap; }
.w34 { width: 34px; } .w36 { width: 36px; } .w40 { width: 40px; } .w44 { width: 44px; } .w48 { width: 48px; } .w50 { width: 50px; } .w54 { width: 54px; } .w56 { width: 56px; } .w58 { width: 58px; } .w64 { width: 64px; } .w66 { width: 66px; } .w72 { width: 72px; }
.w92 { width: 92px; } .w100 { width: 100px; } .w112 { width: 111px; }
.ic32 { width: 32px; height: 32px; flex: none; overflow: visible; }
.ic16 { width: 16px; height: 16px; flex: none; }
.rl { margin-top: 3px; line-height: 14px; color: #3c3c3c; text-align: center; }
.rl2 { line-height: 15px; margin-top: 3px; }
.rl-los { margin-top: 4px; }
.dd { width: 0; height: 0; border: 3px solid transparent; border-top: 3px solid #666; margin-top: 5px; }
.dd-in { display: inline-block; margin: 0 0 1px 0; vertical-align: middle; }
.smallcol { display: flex; flex-direction: column; flex: none; white-space: nowrap; }
.srow { display: flex; align-items: center; height: 18px; gap: 4px; color: #3c3c3c; padding-left: 2px; }
.srow3 { margin-top: 3px; }
.ic-l { margin-right: 12px; }
.ic-leg { margin-left: 3px; margin-right: 6px; }
.sinput { height: 21px; margin-top: 2px; border: 1px solid #cfd2d6; background: #fff; color: #111; font-size: 11px; line-height: 19px; padding-left: 2px; overflow: hidden; white-space: nowrap; }
.inp92 { width: 90px; }
.inp90 { width: 90px; }
.inp105 { width: 105px; }

/* formula */
.fstrip { height: 4px; flex: none; background: #dfe3e8; }
.fstrip2 { height: 5px; flex: none; background: #dfe3e8; border-top: 1px solid #9ea2a7; }
.formula { height: 21px; flex: none; display: flex; background: #fff; }
.namebox { width: 161px; display: flex; align-items: center; position: relative; background: #fff; font-size: 12px; color: #222; padding-top: 1px; }
.nb-text { width: 142px; text-align: center; }
.nb-arrow { width: 0; height: 0; border: 4px solid transparent; border-top: 4px solid #555; margin-top: 4px; margin-left: 4px; }
.fxbox { width: 84px; display: flex; align-items: center; justify-content: space-between; background: #dfe3e8; padding-right: 8px; border-radius: 12px 0 0 12px; border-left: 1px solid #a9adb2; }
.fx-round { width: 7px; height: 7px; border-radius: 50%; background: #c2c6cb; margin-left: 5px; }
.fx { font: italic bold 13px "Liberation Serif", serif; color: #444; }
.finput { flex: 1; }
.fexpand { width: 16px; background: #e1e4e8; border: 1px solid #c6cacf; display: flex; align-items: center; justify-content: center; margin-right: 1px; }
.fexp-ic { width: 9px; height: 6px; }

/* workspace */
.work { height: 894px; flex: none; display: flex; background: #dfe3e8; }
.left { width: 275px; flex: none; display: flex; flex-direction: column; padding-bottom: 3px; }
.vsplit { width: 6px; flex: none; display: flex; align-items: center; justify-content: center; background: #dfe3e8; }
.vsplit-r { width: 5px; }
.grip { width: 2px; height: 14px; background: repeating-linear-gradient(#66707c 0 1px, transparent 1px 3px); }
.center { width: 1371px; flex: none; display: flex; flex-direction: column; }
.right { flex: 1; display: flex; flex-direction: column; }
.phead { height: 25px; flex: none; display: flex; align-items: center; background: linear-gradient(#eef1f5 0%, #cfd7df 50%, #e4e9ef 100%); }
.phead-left { padding-left: 8px; padding-right: 5px; }
.nav-l, .nav-r { width: 0; height: 0; border: 5px solid transparent; }
.nav-l { border-right: 7px solid #a7adb5; border-left: 0; margin-right: 10px; }
.nav-r { border-left: 7px solid #222; border-right: 0; margin-right: 8px; }
.ptitle { font-family: "Liberation Sans", sans-serif; font-weight: bold; font-size: 11.500px; color: #111; margin-left: 9px; white-space: nowrap; }
.ptitle-g { margin-left: 11px; }
.ph-down { width: 0; height: 0; border: 5px solid transparent; border-top: 5px solid #111; margin-top: 5px; margin-right: 8px; }
.chev { font: bold 14px/14px "Liberation Sans", sans-serif; color: #111; }
.chev-l { margin-right: 2px; }
.phead-c { height: 26px; padding-left: 7px; padding-right: 7px; }
.ptitle-c { font-size: 12px; }
.chev-up { transform: rotate(90deg); }
.phead-r { padding-left: 7px; padding-right: 7px; }
.ptitle-a { margin-left: 9px; font-size: 12px; }

.acc { height: 30px; flex: none; margin: 0 2px; display: flex; align-items: center; gap: 3px; background: linear-gradient(#fff 0%, #e8ec9c 50%, #ccd82c 100%); border-bottom: 1px solid #666; border-left: 1px solid #666; border-right: 1px solid #666; padding: 2px 0 0 3px; font-family: "Liberation Sans", sans-serif; font-size: 11px; color: #111; }
.acc-first { margin-top: 2px; height: 31px; border-top: 1px solid #666; }
.acc-on { background: linear-gradient(#c6d614 0%, #a7bc0c 55%, #8ea300 100%); }
.accic { width: 24px; height: 24px; background: #fff; flex: none; display: block; }
.accic svg { width: 24px; height: 24px; display: block; }
.acc-org { margin-left: -1px; }
.gallery { display: grid; grid-template-columns: 134px 134px; grid-auto-rows: 96px; gap: 2px; margin: 1px 0 0 3px; }
.gcell { background: #f0f0f0; display: flex; flex-direction: column; border: 1px solid #e8ebee; }
.gtitle { height: 21px; flex: none; text-align: center; font-family: "DejaVu Sans", sans-serif; font-size: 11px; line-height: 22px; color: #1f10a0; padding-right: 4px; white-space: nowrap; }
.gt-v { color: #3a0ca0; }
.gs { width: 134px; height: 74px; display: block; margin-left: -1px; }
.lim { fill: none; stroke: #aec43a; stroke-width: 1; }
.gax { fill: none; stroke: #555; stroke-width: 1.500; }
.red { fill: none; stroke: #ee1111; stroke-width: 1; }
.dia { fill: #7a9a10; stroke: #222; stroke-width: .7; }
.bz-o { fill: none; stroke: #f2b56b; }
.bz-b { fill: none; stroke: #7d96c4; }
.sq rect { fill: #8ea406; stroke: #566500; stroke-width: 1; }
.sq .sq2 { fill: #b4c812; }

/* chart */
.chart { height: 539px; flex: none; margin: 1px 2px 0 1px; background: #021a10; }
.chart-svg { display: block; }
.grid { fill: none; stroke: #7e847f; stroke-width: 1; }
.axis { fill: none; stroke: #4a4f4c; stroke-width: 1; }
.tick { fill: none; stroke: #8e928f; stroke-width: 3; }
.blue { fill: none; stroke: #3d6199; stroke-width: 1.100; stroke-linejoin: round; }
.blue-b { stroke: #4a70b0; }
.bluedense { fill: none; stroke: #4a70b0; stroke-width: 1; }
.orange { fill: none; stroke: #f0a235; stroke-width: 1.100; stroke-linejoin: round; }
.orangefill { fill: #f0a235; }
.lab { font-family: "DejaVu Sans", sans-serif; font-size: 11px; fill: #f1f1e4; }
.lr { text-anchor: end; }
.yl { transform: translateY(-1px); }
.xl text { text-anchor: middle; }
.leg-bl { stroke: #3d6199; fill: none; }
.leg-ol { stroke: #f0a235; fill: none; }

.hsplit { height: 6px; flex: none; display: flex; justify-content: center; align-items: center; }
.hgrip { width: 18px; height: 2px; background: repeating-linear-gradient(90deg, #66707c 0 1px, transparent 1px 3px); }

/* sheet */
.sheet { flex: 1; display: flex; flex-direction: column; min-height: 0; }
.sheet-main { height: 306px; flex: none; display: flex; overflow: hidden; }
.gridarea { width: 1355px; flex: none; display: flex; flex-direction: column; overflow: hidden; background: #fff; }
.colheads { height: 20px; flex: none; display: flex; background: #dfe2e7; border-bottom: 1px solid #a4a7ac; }
.corner { width: 25px; flex: none; border-right: 1px solid #b5b8bd; display: flex; align-items: center; justify-content: flex-end; }
.corner-ic { width: 16px; height: 14px; margin-right: 3px; }
.ch { width: 80px; flex: none; text-align: center; font-family: "Liberation Sans", sans-serif; font-size: 12.500px; line-height: 21px; color: #3f4b5c; border-right: 1px solid #aeb1b6; }
.ch-on { background: linear-gradient(#f9cd55, #ffeb78); border-right: 1px solid #d6a83a; }
.gridbody { flex: 1; display: flex; min-height: 0; }
.rowheads { width: 25px; flex: none; }
.rh { height: 20px; background: #dfe2e7; border-bottom: 1px solid #a8abb0; border-right: 1px solid #a8abb0; text-align: center; font-family: "Liberation Sans", sans-serif; font-size: 12.500px; line-height: 21px; color: #3f4b5c; }
.rh-on { background: linear-gradient(#f9cd55, #ffeb78); }
.cells { flex: 1; position: relative; background-image: repeating-linear-gradient(90deg, transparent 0 79px, #d4d4d4 79px 80px), repeating-linear-gradient(transparent 0 19px, #d4d4d4 19px 20px); }
.sel { position: absolute; left: 0; top: -1px; width: 81px; height: 22px; border: 2px solid #000; border-right-width: 3px; }
.selh { position: absolute; right: -5px; bottom: -4px; width: 6px; height: 6px; background: #000; border: 1px solid #fff; }

.vscroll { width: 16px; flex: none; display: flex; flex-direction: column; align-items: center; background: #dfe3e8; border-left: 1px solid #c8ccd1; }
.vs-split { width: 14px; height: 6px; border: 1px solid #8c9097; background: #fff; margin-top: 2px; flex: none; }
.vs-up { width: 0; height: 0; border: 4px solid transparent; border-top: 0; border-bottom: 5px solid #555; margin-top: 4px; flex: none; }
.vs-thumb { width: 14px; height: 183px; margin-top: 8px; flex: none; background: linear-gradient(90deg, #fff, #e8eaee); border: 1px solid #a9adb3; border-radius: 2px; display: flex; align-items: center; justify-content: center; }
.vs-grip { width: 6px; height: 6px; background: repeating-linear-gradient(#80858c 0 1px, transparent 1px 2px); }
.vs-track { flex: 1; }
.vs-down { width: 0; height: 0; border: 4px solid transparent; border-bottom: 0; border-top: 5px solid #555; margin-bottom: 7px; flex: none; }

.tabbar { flex: 1; display: flex; align-items: stretch; min-height: 0; background: #dfe3e8; font-family: "Liberation Sans", sans-serif; font-size: 12px; }
.tnav { width: 61px; flex: none; display: flex; align-items: center; gap: 7px; padding-left: 5px; }
.tn { width: 6px; height: 8px; background: #4f5966; flex: none; }
.tn-first, .tn-prev { clip-path: polygon(100% 0, 100% 100%, 0 50%); }
.tn-next, .tn-last { clip-path: polygon(0 0, 0 100%, 100% 50%); }
.stab { width: 65px; flex: none; text-align: center; line-height: 17px; color: #5a6675; border-bottom: 1px solid #b0b4ba; border-right: 1px solid #b0b4ba; }
.stab-on { background: #fff; border-bottom: 2px solid #fff; font-weight: bold; color: #5d6a78; border-left: 1px solid #b0b4ba; width: 69px; }
.stab-new { width: 36px; display: flex; align-items: center; justify-content: center; }
.newsh { width: 14px; height: 12px; }
.hs-split { width: 6px; flex: none; border: 1px solid #8c9097; background: #fff; margin: 1px 9px 1px 0; }
.hs-left, .hs-right { width: 0; height: 0; border: 4px solid transparent; align-self: center; flex: none; }
.hs-left { border-left: 0; border-right: 5px solid #555; }
.hs-right { border-right: 0; border-left: 5px solid #555; }
.hs-thumb { width: 461px; flex: none; margin: 0 37px 0 5px; background: linear-gradient(#f4f5f7, #d6d9de); border: 1px solid #a9adb3; border-radius: 2px; display: flex; align-items: center; justify-content: center; }
.hs-grip { width: 6px; height: 6px; background: repeating-linear-gradient(90deg, #80858c 0 1px, transparent 1px 2px); }
.hs-mini { width: 6px; flex: none; border: 1px solid #8c9097; background: #fff; margin: 1px 0 1px 8px; }
.hs-end { width: 16px; flex: none; }

/* right panel */
.listbox { flex: 1; margin: 4px 4px 22px 4px; background: #fff; border: 1px solid #f2f3f5; border-top: 2px solid #6c6f73; border-left: 2px solid #6c6f73; font-family: "Liberation Sans", sans-serif; font-size: 11px; color: #222; }
.li { height: 24px; display: flex; align-items: center; padding-left: 2px; }
.cb { width: 12px; height: 12px; border: 1px solid #9a9a9a; background: #fff; flex: none; display: flex; align-items: center; justify-content: center; }
.chk { width: 9px; height: 8px; }
.ln { width: 21px; height: 1px; margin: 0 4px 0 2px; flex: none; }
.ln-b { background: #3d6199; } .ln-o { background: #f0a235; } .ln-r { background: #f04a10; } .ln-t { background: #3f92a8; }
.lt { height: 24px; flex: 1; line-height: 24px; padding-left: 3px; }
.lt-c { color: #6a1090; }
.lt-sel { background: #3399ff; color: #fff; }

/* status */
.status { height: 23px; flex: none; display: flex; align-items: center; background: linear-gradient(#e7e9ec, #bfc3c8); border-top: 1px solid #a3a6ab; color: #444; font-family: "Liberation Sans", sans-serif; font-size: 11.500px; }
.st-text { margin-left: 8px; width: 39px; }
.st-sep { width: 1px; height: 20px; background: #9a9da2; }
.st-sep2 { width: 1px; height: 20px; background: #9a9da2; margin-right: 4px; }
.view { width: 19px; height: 19px; display: flex; align-items: center; justify-content: center; margin-right: 1px; }
.view-on { background: linear-gradient(#fdeaa0, #f9c95a); border: 1px solid #d6a83a; border-radius: 2px; }
.vic { width: 14px; height: 11px; }
.vic2 { width: 14px; height: 13px; }
.zoomtx { margin-left: 7px; width: 39px; color: #333; font-size: 12px; }
.zbtn { width: 16px; height: 16px; border: 1px solid #7f8388; border-radius: 50%; background: linear-gradient(#fff, #d8dade); text-align: center; font: bold 14px/13px "Liberation Sans", sans-serif; color: #444; flex: none; }
.zslider { width: 100px; height: 1px; background: #9da1a6; position: relative; flex: none; }
.zthumb { position: absolute; left: 45px; top: -6px; width: 9px; height: 12px; background: #f5f6f7; border: 1px solid #7f8388; clip-path: polygon(0 0, 100% 0, 100% 65%, 50% 100%, 0 65%); }
.status .zbtn:last-child { margin-right: 4px; }

/* callouts */
.callout { position: absolute; width: 60px; height: 46px; background: #5fa324; border: 2px solid #d99c3e; border-radius: 4px; color: #fff; font-family: "Open Sans", sans-serif; font-weight: 600; font-size: 18px; line-height: 40px; text-align: center; }
.callout::before, .callout::after { content: ""; position: absolute; top: 100%; }
.callout::before { left: 14px; width: 20px; height: 11px; background: #d99c3e; clip-path: polygon(0 0, 100% 0, 4% 100%); }
.callout::after { left: 16px; width: 14px; height: 7px; margin-top: -2px; background: #5fa324; clip-path: polygon(0 0, 100% 0, 0 100%); }
.c1 { left: 627px; top: 153px; }
.c2 { left: 1803px; top: 153px; }
.c3 { left: 172px; top: 155px; }
.c4 { left: 703px; top: 1px; }
```
